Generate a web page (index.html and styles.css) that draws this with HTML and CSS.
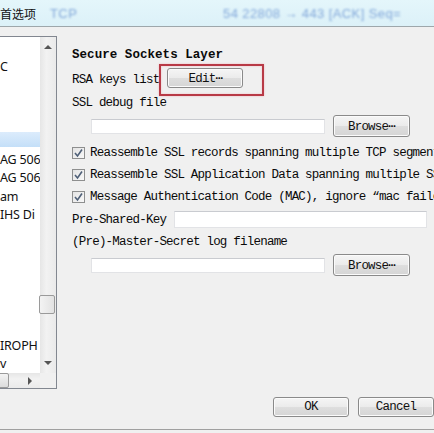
FILE: index.html
```html
<!DOCTYPE html>
<html lang="zh-CN">
<head>
    <meta charset="UTF-8">
    <meta name="viewport" content="width=device-width, initial-scale=1.0">
    <title>首选项</title>
    <link rel="stylesheet" href="styles.css">
</head>
<body>
    <div class="titlebar">
        <span class="title">首选项</span>
        <div class="packets">
            <div class="packet-row"><span class="proto">TCP</span><span class="info">54 22808 → 443 [ACK] Seq=</span></div>
        </div>
    </div>

    <div class="main">
        <div class="tree">
            <div class="tree-view">
                <div class="tree-items">
                    <div class="tree-item"></div>
                    <div class="tree-item">C</div>
                    <div class="tree-item"></div>
                    <div class="tree-item"></div>
                    <div class="tree-item"></div>
                    <div class="tree-item selected"></div>
                    <div class="tree-item">AG 506</div>
                    <div class="tree-item">AG 506</div>
                    <div class="tree-item">am</div>
                    <div class="tree-item">IHS Di</div>
                    <div class="tree-item"></div>
                    <div class="tree-item"></div>
                    <div class="tree-item"></div>
                    <div class="tree-item"></div>
                    <div class="tree-item"></div>
                    <div class="tree-item"></div>
                    <div class="tree-item">IROPH</div>
                    <div class="tree-item">v</div>
                </div>
                <div class="vscroll">
                    <span class="arrow arrow-up"></span>
                    <div class="vtrack"><span class="vthumb"></span></div>
                    <span class="arrow arrow-down"></span>
                </div>
                <div class="hscroll">
                    <span class="hthumb"></span>
                    <span class="htrack"></span>
                    <span class="arrow arrow-right"></span>
                </div>
                <div class="corner"></div>
            </div>
        </div>

        <div class="panel">
            <h2 class="section-title">Secure Sockets Layer</h2>
            <div class="row row-rsa">
                <span>RSA keys list</span>
                <span class="highlight"><button class="btn btn-edit">Edit⋯</button></span>
            </div>
            <div class="row row-label">SSL debug file</div>
            <div class="row row-file">
                <span class="input input-file"></span>
                <button class="btn btn-browse">Browse⋯</button>
            </div>
            <div class="row row-check first-check">
                <span class="box"><svg width="11" height="10" viewBox="0 0 11 10"><path d="M2 5 L4.5 8 L9 1.5" fill="none" stroke="#4f6078" stroke-width="1.6"/></svg></span>
                Reassemble SSL records spanning multiple TCP segments
            </div>
            <div class="row row-check">
                <span class="box"><svg width="11" height="10" viewBox="0 0 11 10"><path d="M2 5 L4.5 8 L9 1.5" fill="none" stroke="#4f6078" stroke-width="1.6"/></svg></span>
                Reassemble SSL Application Data spanning multiple SSL records
            </div>
            <div class="row row-check">
                <span class="box"><svg width="11" height="10" viewBox="0 0 11 10"><path d="M2 5 L4.5 8 L9 1.5" fill="none" stroke="#4f6078" stroke-width="1.6"/></svg></span>
                Message Authentication Code (MAC), ignore “mac failed”
            </div>
            <div class="row row-psk">
                <span>Pre-Shared-Key</span>
                <span class="input input-psk"></span>
            </div>
            <div class="row row-label2">(Pre)-Master-Secret log filename</div>
            <div class="row row-file2">
                <span class="input input-file"></span>
                <button class="btn btn-browse">Browse⋯</button>
            </div>
        </div>
    </div>

    <div class="footer">
        <button class="btn btn-dialog">OK</button>
        <button class="btn btn-dialog">Cancel</button>
    </div>
</body>
</html>
```

FILE: styles.css
```css
body {
    margin: 0;
    width: 434px;
    height: 433px;
    overflow: hidden;
    background-color: #f0f0f0;
    font-family: "Liberation Mono", "DejaVu Sans Mono", monospace;
    font-size: 12.5px;
    letter-spacing: -0.78px;
    color: #0a0a0a;
}

/* glass title bar with the packet list behind it */
.titlebar {
    display: flex;
    height: 26px;
    overflow: hidden;
    background: linear-gradient(#e4f6fb, #dcf1f8);
    border-bottom: 1px solid #9ea7ab;
}
.title {
    flex-shrink: 0;
    width: 50px;
    font-family: "Noto Sans CJK SC", sans-serif;
    font-size: 12px;
    letter-spacing: 0;
    line-height: 27px;
    color: #111;
}
.packets {
    flex: 1;
    font-family: "Liberation Sans", sans-serif;
    font-size: 13px;
    letter-spacing: 0.4px;
    color: #83a8da;
    filter: blur(0.8px);
}
.packet-row {
    display: flex;
    height: 26px;
    line-height: 28px;
    white-space: nowrap;
}
.proto {
    width: 173px;
}

.main {
    display: flex;
    height: 362px;
}

/* tree on the left */
.tree {
    flex-shrink: 0;
    width: 57px;
    padding-top: 9px;
}
.tree-view {
    display: grid;
    grid-template-columns: 40px 16px;
    grid-template-rows: 1fr 15px;
    height: 353px;
    box-sizing: border-box;
    border: 1px solid #828790;
    border-left: none;
    background-color: #fff;
}
.tree-items {
    overflow: hidden;
    padding-top: 1px;
    font-family: "Noto Sans", sans-serif;
    font-size: 12.5px;
    letter-spacing: -0.2px;
    color: #111;
}
.tree-item {
    height: 18.6px;
    line-height: 19px;
    white-space: nowrap;
}
.tree-item.selected {
    background: linear-gradient(#dcecfc, #c4dff8) 0 1px / 100% 15px no-repeat;
}
.vscroll {
    display: flex;
    flex-direction: column;
    background: linear-gradient(to right, #e6e6e6, #f2f2f2 40%, #eaeaea);
}
.arrow {
    display: flex;
    align-items: center;
    justify-content: center;
    height: 20px;
}
.arrow::after {
    content: '';
    border: 4px solid transparent;
}
.arrow-up::after {
    border-bottom: 4px solid #555;
    border-top-width: 0;
}
.arrow-down::after {
    border-top: 4px solid #555;
    border-bottom-width: 0;
}
.arrow-right {
    width: 20px;
    height: auto;
}
.arrow-right::after {
    border-left: 4px solid #555;
    border-right-width: 0;
}
.vtrack {
    flex: 1;
}
.vthumb {
    display: block;
    height: 17px;
    margin: 238px 1px 0 -1px;
    border: 1px solid #9a9a9a;
    border-radius: 2px;
    background: linear-gradient(to right, #f3f3f3, #e2e2e2);
}
.hscroll {
    display: flex;
    overflow: hidden;
    background: linear-gradient(#e6e6e6, #f2f2f2 40%, #eaeaea);
}
.hthumb {
    flex-shrink: 0;
    width: 17px;
    margin-left: -10px;
    border: 1px solid #9a9a9a;
    border-radius: 2px;
    background: linear-gradient(#f3f3f3, #dcdcdc);
}
.htrack {
    flex: 1;
}
.corner {
    background-color: #f0f0f0;
}

/* settings panel */
.panel {
    flex: 1;
    padding: 17px 0 0 15px;
    overflow: hidden;
    white-space: nowrap;
}
.section-title {
    margin: 0;
    height: 22px;
    line-height: 22px;
    font-size: 12.5px;
    font-weight: bold;
    letter-spacing: 0.05px;
}
.row {
    display: flex;
    align-items: center;
}
.row-rsa {
    height: 28px;
}
.row-label {
    height: 18px;
}
.row-file {
    height: 28px;
}
.row-check {
    height: 22px;
}
.first-check {
    margin-top: 2px;
}
.row-psk {
    height: 23px;
}
.row-label2 {
    height: 22px;
}
.row-file2 {
    height: 24px;
}
.box {
    display: flex;
    align-items: center;
    justify-content: center;
    flex-shrink: 0;
    width: 13px;
    height: 12px;
    box-sizing: border-box;
    margin-right: 5px;
    border: 1px solid #8e8f8f;
    background: linear-gradient(135deg, #e4e4e4, #f8f8f8);
}
.input {
    display: block;
    flex-shrink: 0;
    box-sizing: border-box;
    background-color: #fff;
    border: 1px solid #e2e3e6;
    border-top-color: #c9cbd0;
}
.input-file {
    width: 234px;
    height: 15px;
    margin: 0 8px 0 19px;
}
.input-psk {
    width: 253px;
    height: 17px;
    margin-left: 8px;
}

.btn {
    flex-shrink: 0;
    padding: 0;
    font: inherit;
    letter-spacing: inherit;
    color: #111;
    border: 1px solid #8a8a8a;
    border-radius: 3px;
    background: linear-gradient(#f5f5f5, #ebebeb 50%, #dedede 51%, #d5d5d5);
    box-shadow: inset 0 0 0 1px #fbfbfb;
}
.btn-edit {
    width: 76px;
    height: 20px;
}
.btn-browse {
    width: 77px;
    height: 22px;
}
.highlight {
    position: relative;
    display: flex;
    margin: 0 0 4px 8px;
}
/* red annotation box drawn over the Edit button */
.highlight::after {
    content: '';
    position: absolute;
    top: -4px;
    bottom: -8px;
    left: -8px;
    right: -21px;
    border: 2px solid #b83a46;
    box-shadow: 0 0 2px #f0b8bd, inset 0 0 2px #f0b8bd;
}

.footer {
    display: flex;
    justify-content: flex-end;
    gap: 9px;
    padding: 8px 0 12px;
    border-bottom: 1px solid #a0a0a0;
}
.btn-dialog {
    width: 76px;
    height: 20px;
}
```
